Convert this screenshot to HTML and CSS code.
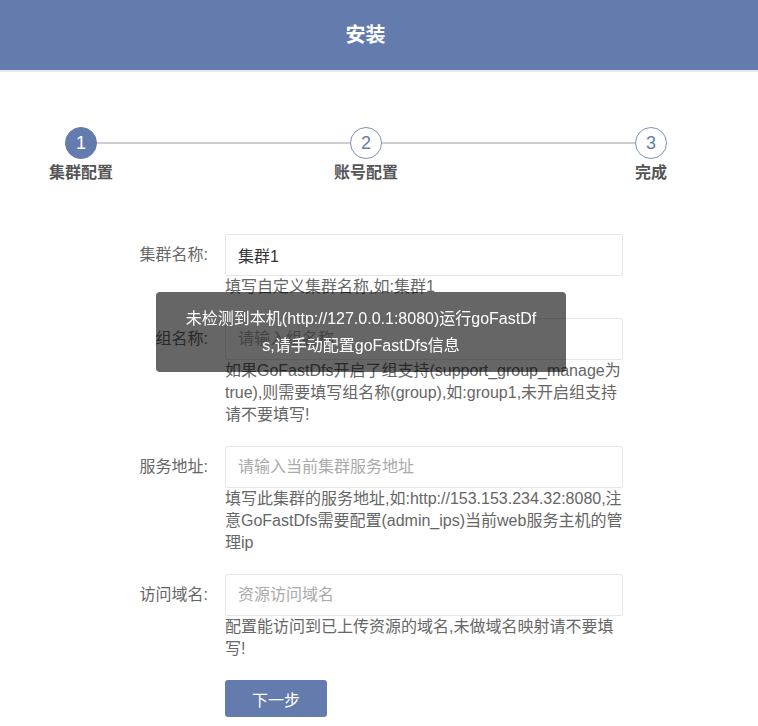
FILE: index.html
```html
<!DOCTYPE html>
<html lang="zh-CN">
<head>
  <meta charset="UTF-8">
  <meta name="viewport" content="width=device-width, initial-scale=1.0">
  <title>安装</title>
  <link rel="stylesheet" href="styles.css">
</head>
<body>

<header class="top-bar">
  <h1>安装</h1>
</header>

<div class="steps">
  <div class="step active">
    <span class="step-num">1</span>
    <span class="step-title">集群配置</span>
  </div>
  <div class="step">
    <span class="step-num">2</span>
    <span class="step-title">账号配置</span>
  </div>
  <div class="step">
    <span class="step-num">3</span>
    <span class="step-title">完成</span>
  </div>
</div>

<form class="setup-form" onsubmit="return false">
  <div class="form-item">
    <label for="clusterName">集群名称:</label>
    <div class="field">
      <input type="text" id="clusterName" value="集群1">
      <p class="help">填写自定义集群名称,如:集群1</p>
    </div>
  </div>
  <div class="form-item">
    <label for="groupName">组名称:</label>
    <div class="field">
      <input type="text" id="groupName" placeholder="请输入组名称">
      <p class="help">如果GoFastDfs开启了组支持(support_group_manage为true),则需要填写组名称(group),如:group1,未开启组支持请不要填写!</p>
    </div>
  </div>
  <div class="form-item">
    <label for="serviceAddr">服务地址:</label>
    <div class="field">
      <input type="text" id="serviceAddr" placeholder="请输入当前集群服务地址">
      <p class="help">填写此集群的服务地址,如:http://153.153.234.32:8080,注意GoFastDfs需要配置(admin_ips)当前web服务主机的管理ip</p>
    </div>
  </div>
  <div class="form-item">
    <label for="domain">访问域名:</label>
    <div class="field">
      <input type="text" id="domain" placeholder="资源访问域名">
      <p class="help">配置能访问到已上传资源的域名,未做域名映射请不要填写!</p>
    </div>
  </div>
  <button class="next-btn" type="button">下一步</button>
</form>

<div class="toast">未检测到本机(http://127.0.0.1:8080)运行goFastDfs,请手动配置goFastDfs信息</div>

</body>
</html>
```

FILE: styles.css
```css
body {
  margin: 0;
  padding: 0;
  background: #fff;
  font-family: "Liberation Sans", "Noto Sans CJK SC", sans-serif;
  color: #666;
}
.top-bar {
  height: 70px;
  background: #637bad;
  border-bottom: 2px solid #e4e8f0;
  padding-right: 27px;
}
.top-bar h1 {
  margin: 0;
  line-height: 70px;
  font-size: 20px;
  font-weight: bold;
  color: #fff;
  text-align: center;
}
.steps {
  position: relative;
  display: grid;
  grid-template-columns: repeat(3, 64px);
  column-gap: 221px;
  margin: 55px 0 0 49px;
  width: 634px;
}
.steps::before {
  content: "";
  position: absolute;
  left: 32px;
  right: 32px;
  top: 15px;
  height: 2px;
  background: #cfcfcf;
}
.step {
  display: flex;
  flex-direction: column;
  align-items: center;
}
.step-num {
  position: relative;
  width: 30px;
  height: 30px;
  border: 1px solid #7d91bd;
  border-radius: 50%;
  background: #fff;
  color: #637bad;
  font-size: 18px;
  line-height: 30px;
  text-align: center;
}
.step.active .step-num {
  background: #637bad;
  border-color: #637bad;
  color: #fff;
}
.step-title {
  margin-top: 3px;
  font-size: 16px;
  line-height: 22px;
  font-weight: bold;
  color: #555;
  white-space: nowrap;
}
.setup-form {
  margin: 50px 0 0 108px;
}
.form-item {
  display: flex;
  align-items: flex-start;
  margin-bottom: 20px;
}
.form-item label {
  width: 100px;
  margin-right: 17px;
  text-align: right;
  font-size: 16px;
  line-height: 42px;
  color: #666;
}
.field {
  width: 398px;
}
.field input {
  box-sizing: border-box;
  width: 100%;
  height: 42px;
  padding: 0 12px;
  border: 1px solid #e6e6e6;
  border-radius: 2px;
  font-family: inherit;
  font-size: 16px;
  color: #333;
  outline: none;
}
.field input::placeholder {
  color: #aaa;
}
.help {
  margin: 0;
  font-size: 16px;
  line-height: 22px;
  color: #666;
}
.next-btn {
  margin-left: 117px;
  width: 102px;
  height: 37px;
  border: none;
  border-radius: 3px;
  background: #637bad;
  color: #fff;
  font-family: inherit;
  font-size: 16px;
  cursor: pointer;
}
.toast {
  position: fixed;
  left: 156px;
  top: 292px;
  box-sizing: border-box;
  width: 410px;
  padding: 13px 28px;
  border-radius: 4px;
  background: rgba(0, 0, 0, 0.6);
  color: #fff;
  font-size: 16px;
  line-height: 27px;
  text-align: center;
  word-break: break-all;
}
```
